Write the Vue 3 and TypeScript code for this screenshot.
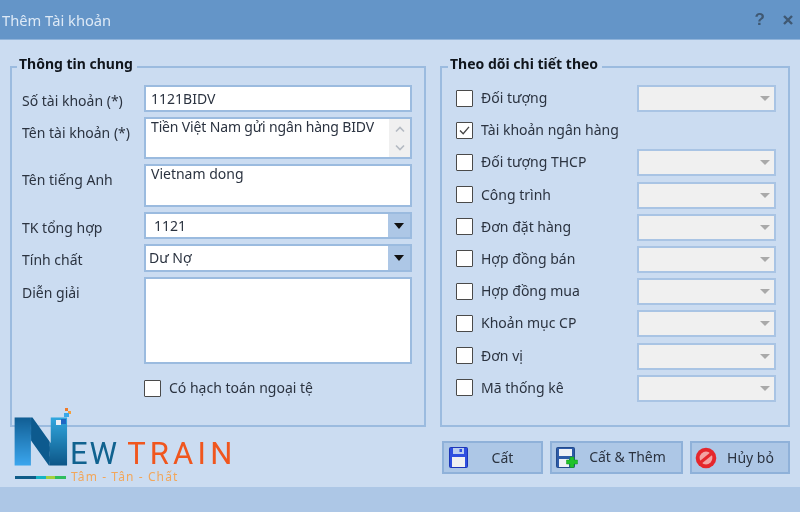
<script setup lang="ts">
const leftRows = [
  { label: 'Số tài khoản (*)', value: '1121BIDV', kind: 'text', cls: 'h27' },
  { label: 'Tên tài khoản (*)', value: 'Tiền Việt Nam gửi ngân hàng BIDV', kind: 'scroll', cls: 'h42' },
  { label: 'Tên tiếng Anh', value: 'Vietnam dong', kind: 'area', cls: 'h43' },
  { label: 'TK tổng hợp', value: '1121', kind: 'combo', cls: 'h27' },
  { label: 'Tính chất', value: 'Dư Nợ', kind: 'combo tight', cls: 'h28' },
  { label: 'Diễn giải', value: '', kind: 'area', cls: 'h87' },
]
const trackRows = [
  { label: 'Đối tượng', checked: false, combo: true },
  { label: 'Tài khoản ngân hàng', checked: true, combo: false },
  { label: 'Đối tượng THCP', checked: false, combo: true },
  { label: 'Công trình', checked: false, combo: true },
  { label: 'Đơn đặt hàng', checked: false, combo: true },
  { label: 'Hợp đồng bán', checked: false, combo: true },
  { label: 'Hợp đồng mua', checked: false, combo: true },
  { label: 'Khoản mục CP', checked: false, combo: true },
  { label: 'Đơn vị', checked: false, combo: true },
  { label: 'Mã thống kê', checked: false, combo: true },
]
</script>

<template>
  <div class="dialog">
    <header class="titlebar">
      <span class="title">Thêm Tài khoản</span>
      <span class="tools">
        <span class="help">?</span>
        <svg class="close" width="10" height="10" viewBox="0 0 10 10"><path d="M1 1l8 8M9 1l-8 8" stroke="#3f5872" stroke-width="2.4" /></svg>
      </span>
    </header>

    <main class="content">
      <div class="groups">
        <fieldset class="group left">
          <legend>Thông tin chung</legend>
          <div class="form">
            <div v-for="row in leftRows" :key="row.label" class="form-row" :class="row.cls">
              <label class="form-label">{{ row.label }}</label>
              <div class="box" :class="row.kind">
                <span class="box-text">{{ row.value }}</span>
                <span v-if="row.kind === 'scroll'" class="scrollbar">
                  <svg width="12" height="8" viewBox="0 0 12 8"><path d="M2 6.500l4-4 4 4" fill="none" stroke="#b4bac2" stroke-width="1.600" /></svg>
                  <svg width="12" height="8" viewBox="0 0 12 8"><path d="M2 1.500l4 4 4-4" fill="none" stroke="#b4bac2" stroke-width="1.600" /></svg>
                </span>
                <span v-if="row.kind.startsWith('combo')" class="drop"><i class="tri"></i></span>
              </div>
            </div>
          </div>
          <div class="foreign">
            <span class="check"></span>
            <span>Có hạch toán ngoại tệ</span>
          </div>
        </fieldset>

        <fieldset class="group right">
          <legend>Theo dõi chi tiết theo</legend>
          <div v-for="row in trackRows" :key="row.label" class="track-row">
            <span class="check">
              <svg v-if="row.checked" width="13" height="13" viewBox="0 0 13 13"><path d="M2 6.500l3.200 3.200L11 2.800" fill="none" stroke="#444" stroke-width="1.300" /></svg>
            </span>
            <span class="track-label">{{ row.label }}</span>
            <span v-if="row.combo" class="disabled-combo"><i class="tri grey"></i></span>
          </div>
        </fieldset>
      </div>

      <div class="bottom">
        <div class="logo">
          <div class="logo-main">
            <svg class="logo-n" width="52" height="50" viewBox="0 0 52 50">
              <defs>
                <linearGradient id="stemA" x1="0" y1="0" x2="0" y2="1">
                  <stop offset="0" stop-color="#0c568a" />
                  <stop offset="1" stop-color="#3ca8f0" />
                </linearGradient>
                <linearGradient id="stemB" x1="0" y1="0" x2="0" y2="1">
                  <stop offset="0" stop-color="#35b0e8" />
                  <stop offset="1" stop-color="#0c5485" />
                </linearGradient>
                <pattern id="nFill" patternUnits="userSpaceOnUse" x="0" y="-50" width="50" height="54">
                  <rect width="15" height="54" fill="url(#stemA)" />
                  <rect x="15" width="15" height="54" fill="#0d5a8e" />
                  <rect x="30" width="20" height="54" fill="url(#stemB)" />
                </pattern>
              </defs>
              <text class="n-glyph" transform="translate(-2.600 47.500) scale(1.247 1)" fill="url(#nFill)" stroke="url(#nFill)" stroke-width="5">N</text>
            </svg>
            <span class="logo-ew">EW</span>
            <span class="logo-train">TRAIN</span>
            <i class="dot d1"></i><i class="dot d2"></i><i class="dot d3"></i><i class="dot d4"></i><i class="dot d5"></i>
          </div>
          <div class="logo-sub">
            <span class="bar"></span>
            <span class="tag">Tâm - Tân - Chất</span>
          </div>
        </div>
        <div class="actions">
          <button class="btn b1">
            <svg width="19" height="21" viewBox="0 0 19 21">
              <rect x="0.500" y="0.500" width="18" height="20" rx="1" fill="#2f4fe0" stroke="#1d36b8" />
              <rect x="4" y="1" width="11" height="6" fill="#b9cdf0" />
              <rect x="10.500" y="2" width="2.500" height="3" fill="#2f4fe0" />
              <rect x="3" y="10" width="13" height="10" fill="#f1f1f1" />
            </svg>
            <span>Cất</span>
          </button>
          <button class="btn b2">
            <svg width="22" height="22" viewBox="0 0 22 22">
              <rect x="0.500" y="0.500" width="18" height="20" rx="1" fill="#2d5ba8" stroke="#234a8c" />
              <rect x="3" y="2" width="13" height="7" fill="#eef1f6" />
              <rect x="3" y="12" width="10" height="8" fill="#eef1f6" />
              <path d="M14 10h4v3h3.500v4H18v3.500h-4V17h-3.500v-4H14z" fill="#1fc22a" stroke="#129a1c" stroke-width=".5" />
            </svg>
            <span>Cất &amp; Thêm</span>
          </button>
          <button class="btn b3">
            <svg width="22" height="22" viewBox="0 0 22 22">
              <circle cx="11" cy="11" r="10.300" fill="#e5262c" />
              <circle cx="11" cy="11" r="6.400" fill="#f3a3a3" />
              <path d="M5.500 15.500l11-9" stroke="#e5262c" stroke-width="3" />
            </svg>
            <span>Hủy bỏ</span>
          </button>
        </div>
      </div>
    </main>

    <footer class="statusbar"></footer>
  </div>
</template>

<style>
html, body { margin: 0; padding: 0; }
</style>

<style scoped>
.dialog {
  width: 800px;
  height: 512px;
  display: flex;
  flex-direction: column;
  overflow: hidden;
  background: #cbdcf1;
  color: #2b3340;
  font: 14px/20px "Noto Sans", "Liberation Sans", sans-serif;
  filter: blur(0.3px);
}
.titlebar {
  height: 40px;
  box-sizing: border-box;
  flex: none;
  display: flex;
  align-items: center;
  justify-content: space-between;
  padding: 0 7px 0 2px;
  background: #6495c8;
  border-bottom: 1px solid #8fb3da;
}
.title { color: #dde9f6; font-size: 14.700px; }
.tools { display: flex; align-items: center; gap: 18px; }
.help { color: #3f5872; font: bold 17px/20px "Liberation Sans", sans-serif; }
.content { flex: 1; padding: 15px 10px 0; min-height: 0; }
.groups { display: flex; gap: 14px; }
.group {
  margin: 0;
  box-sizing: border-box;
  height: 372px;
  border: 2px solid #9bbbdf;
  min-width: 0;
}
.group legend {
  padding: 0 4px 5px 2px;
  font-weight: 700;
  font-size: 14px;
  line-height: 18px;
  color: #10151c;
}
.left legend { margin-left: -5px; }
.right legend { margin-left: -8px; }
.left { width: 416px; padding: 7px 12px 0 10px; }
.right { width: 350px; padding: 7px 12px 0 14px; }
.form { display: flex; flex-direction: column; gap: 5px; }
.form-row { display: flex; }
.h27 { height: 27px; }
.h28 { height: 28px; }
.h42 { height: 42px; }
.h43 { height: 43px; }
.h87 { height: 87px; }
.form-label { width: 122px; padding-top: 6px; flex: none; }
.box {
  flex: 1;
  box-sizing: border-box;
  display: flex;
  background: #fff;
  border: 2px solid #9bbbdf;
  min-width: 0;
}
.box-text { flex: 1; padding: 2px 0 0 5px; white-space: nowrap; overflow: hidden; }
.area .box-text, .scroll .box-text { padding-top: 0; margin-top: -2px; }
.scroll .box-text { letter-spacing: -0.150px; }
.combo .box-text { padding-left: 8px; }
.combo.tight .box-text { padding-left: 3px; }
.scrollbar {
  width: 21px;
  flex: none;
  background: #f0f0f0;
  display: flex;
  flex-direction: column;
  align-items: center;
  justify-content: space-around;
}
.drop {
  width: 22px;
  flex: none;
  background: #adc7e6;
  display: flex;
  align-items: center;
  justify-content: center;
}
.tri {
  width: 0;
  height: 0;
  border-left: 5.500px solid transparent;
  border-right: 5.500px solid transparent;
  border-top: 6px solid #111;
}
.tri.grey { border-top-color: #a9a9a9; border-left-width: 5px; border-right-width: 5px; border-top-width: 5px; }
.check {
  width: 17px;
  height: 17px;
  box-sizing: border-box;
  flex: none;
  display: flex;
  align-items: center;
  justify-content: center;
  background: #fff;
  border: 1.500px solid #4a4a4a;
  border-radius: 1px;
}
.foreign {
  display: flex;
  align-items: center;
  gap: 8px;
  margin: 14px 0 0 122px;
}
.track-row { display: flex; align-items: center; height: 27px; margin-bottom: 5.200px; }
.track-row .check { margin-top: -1px; }
.track-label { margin-left: 8px; margin-top: -1px; }
.disabled-combo {
  margin-left: auto;
  width: 139px;
  height: 27px;
  box-sizing: border-box;
  background: #f0f0f0;
  border: 2px solid #a9c4e4;
  display: flex;
  align-items: center;
  justify-content: flex-end;
  padding-right: 4px;
}
.bottom { display: flex; justify-content: space-between; }
.logo { margin: -12px 0 0 5px; width: 225px; position: relative; z-index: 1; }
.logo-main { position: relative; height: 56px; display: flex; align-items: flex-start; }
.logo-n { flex: none; overflow: visible; }
.n-glyph { font: 700 63px "Liberation Sans", sans-serif; }
.logo-ew, .logo-train {
  font: 400 31px/26px Roboto, sans-serif;
  margin-top: 26px;
}
.logo-ew { color: #10628f; margin-left: 3px; letter-spacing: 2px; }
.logo-train { color: #f0561e; margin-left: 8px; letter-spacing: 4.200px; }
.dot { position: absolute; }
.d1 { left: 50px; top: -7px; width: 3px; height: 3px; background: #f07a28; }
.d2 { left: 53px; top: -4px; width: 3px; height: 3px; background: #f5a03c; }
.d3 { left: 49px; top: -2px; width: 5px; height: 4px; background: #3aa8e8; }
.d4 { left: 41px; top: 5px; width: 5px; height: 5px; background: #e8eef6; }
.d5 { left: 46px; top: 4px; width: 5px; height: 5px; background: #1f68c4; }
.logo-sub { display: flex; align-items: center; gap: 5px; margin-top: -2px; }
.bar {
  width: 51px;
  height: 3px;
  background: linear-gradient(90deg, #0f5c88 0 42%, #16b3c4 42% 60%, #a5cf3e 60% 78%, #2fbd5f 78%);
}
.tag { color: #f2a65a; font-size: 12px; line-height: 16px; letter-spacing: 1.100px; }
.actions { display: flex; gap: 7px; margin-top: 14px; }
.btn {
  height: 33px;
  box-sizing: border-box;
  display: flex;
  align-items: center;
  padding: 0 4px 0 5px;
  background: #adc7e6;
  border: 2px solid #8fb1d9;
  color: #2b3340;
  font: inherit;
}
.btn span { flex: 1; text-align: center; }
.b1 { width: 101px; }
.b2 { width: 133px; padding-left: 4px; }
.b2 span { margin-top: -2px; }
.b3 { width: 100px; padding-left: 3px; }
.statusbar { height: 25px; flex: none; background: #adc7e6; }
</style>
